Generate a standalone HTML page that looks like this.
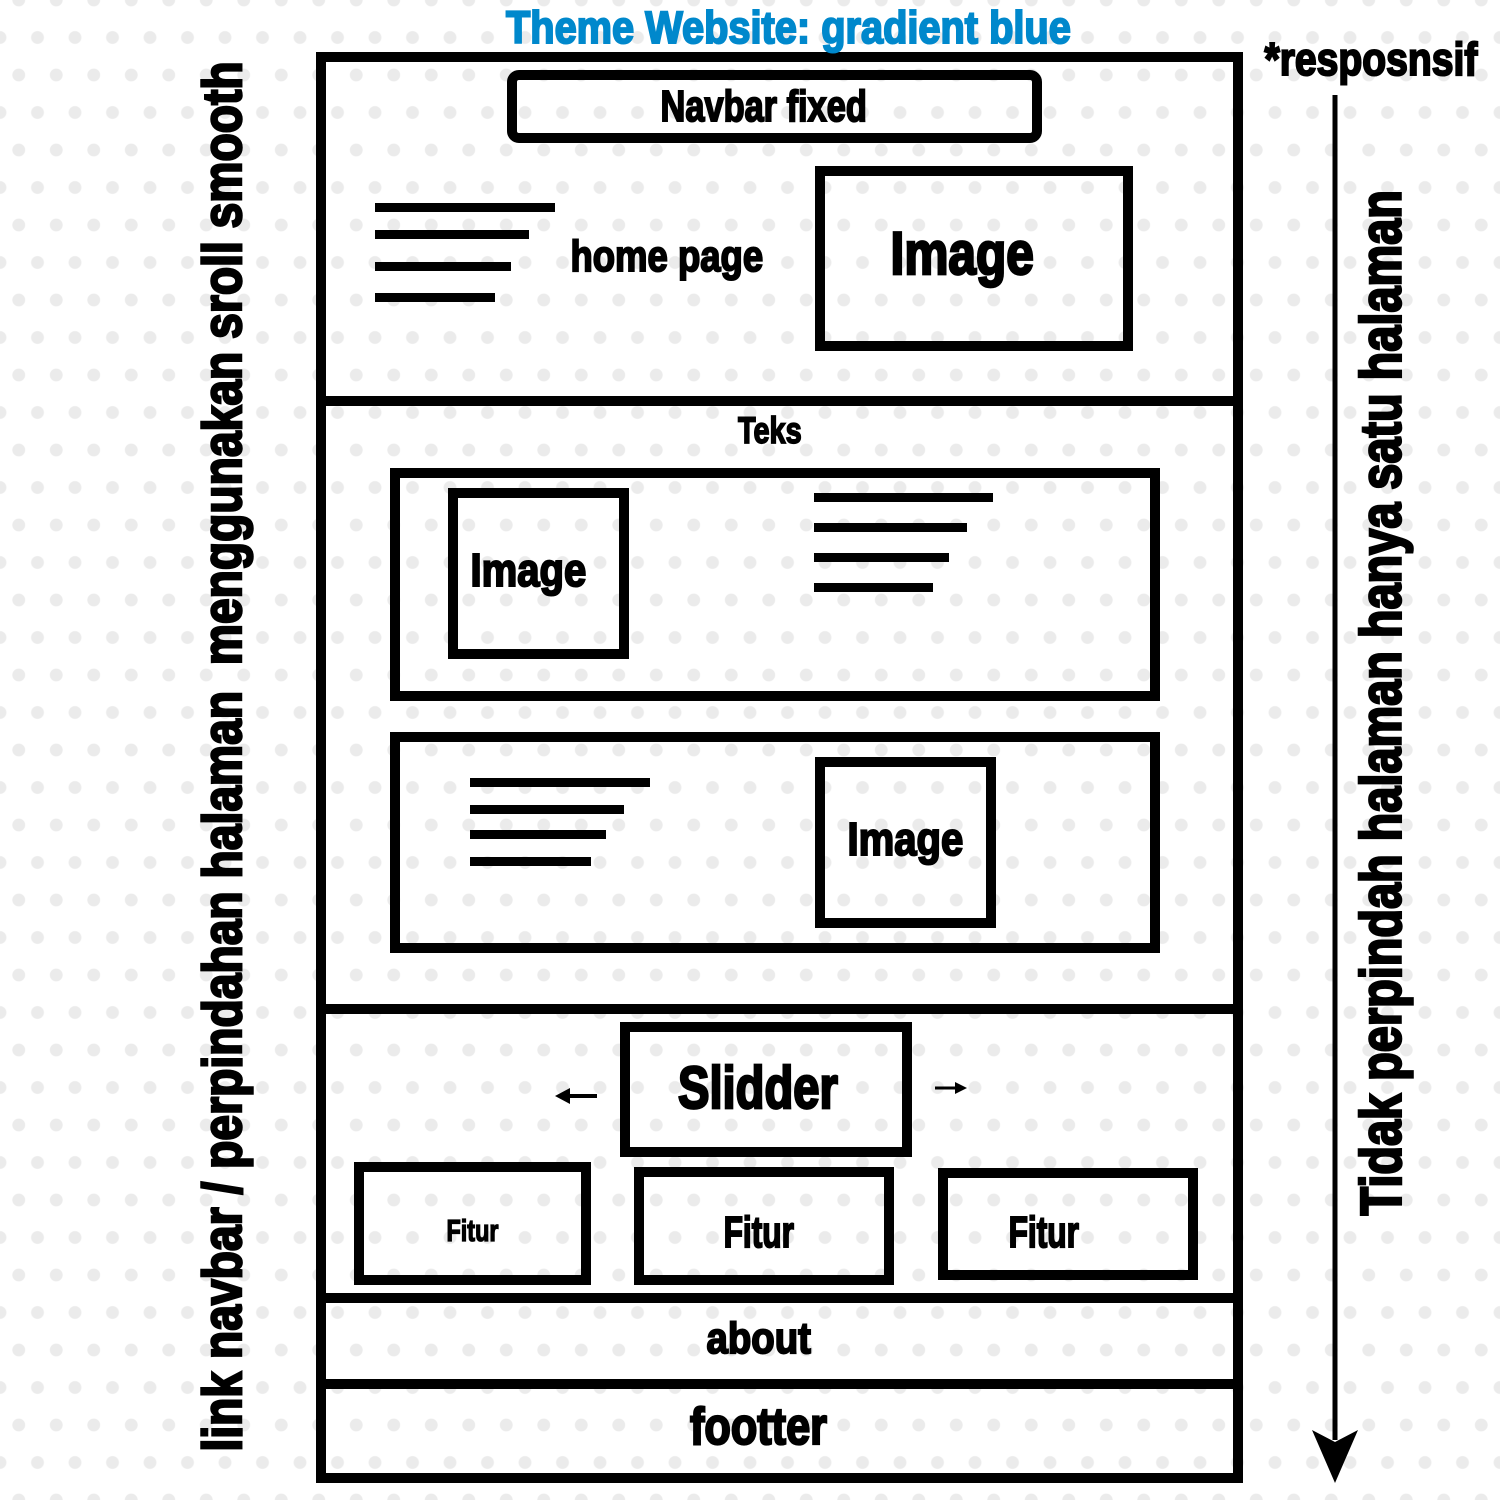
<!DOCTYPE html>
<html><head><meta charset="utf-8"><style>
html,body{margin:0;padding:0}
body{width:1500px;height:1500px;position:relative;overflow:hidden;background-color:#fff;
background-image:radial-gradient(circle at center,#ebebeb 6px,transparent 6.8px),radial-gradient(circle at center,#ebebeb 6px,transparent 6.8px);
background-size:37.5px 75px,37.5px 75px;background-position:0 -37.5px,-18.75px 0;}
.b{position:absolute;border:10px solid #000;box-sizing:border-box}
.l{position:absolute;background:#000;height:9px}
.t{position:absolute;white-space:pre;line-height:1;font-family:"Liberation Sans Narrow","Liberation Sans",sans-serif;font-weight:bold;color:#000;transform-origin:center center}
</style></head><body>
<div class="b" style="left:316px;top:52px;width:927px;height:1431px"></div>
<div class="l" style="left:316px;top:396px;width:927px;height:10px"></div>
<div class="l" style="left:316px;top:1004px;width:927px;height:10px"></div>
<div class="l" style="left:316px;top:1293px;width:927px;height:10px"></div>
<div class="l" style="left:316px;top:1379px;width:927px;height:10px"></div>
<div class="b" style="left:507px;top:70px;width:535px;height:73px;border-radius:12px"></div>
<div class="l" style="left:375px;top:203px;width:180px"></div>
<div class="l" style="left:375px;top:230px;width:154px"></div>
<div class="l" style="left:375px;top:262px;width:136px"></div>
<div class="l" style="left:375px;top:293px;width:120px"></div>
<div class="b" style="left:815px;top:166px;width:318px;height:185px"></div>
<div class="b" style="left:390px;top:468px;width:770px;height:233px"></div>
<div class="b" style="left:448px;top:488px;width:181px;height:171px"></div>
<div class="l" style="left:814px;top:493px;width:179px"></div>
<div class="l" style="left:814px;top:523px;width:153px"></div>
<div class="l" style="left:814px;top:553px;width:135px"></div>
<div class="l" style="left:814px;top:583px;width:119px"></div>
<div class="b" style="left:390px;top:732px;width:770px;height:221px"></div>
<div class="l" style="left:470px;top:778px;width:180px"></div>
<div class="l" style="left:470px;top:805px;width:154px"></div>
<div class="l" style="left:470px;top:830px;width:136px"></div>
<div class="l" style="left:470px;top:857px;width:121px"></div>
<div class="b" style="left:815px;top:757px;width:181px;height:171px"></div>
<div class="b" style="left:620px;top:1022px;width:292px;height:135px"></div>
<div class="b" style="left:354px;top:1162px;width:237px;height:123px"></div>
<div class="b" style="left:634px;top:1167px;width:260px;height:118px"></div>
<div class="b" style="left:938px;top:1168px;width:260px;height:112px"></div>
<svg style="position:absolute;left:0;top:0" width="1500" height="1500">
<path d="M597 1096H565" stroke="#000" stroke-width="4"/><path d="M555 1096L570 1088L570 1104Z" fill="#000"/>
<path d="M935 1088H958" stroke="#000" stroke-width="3"/><path d="M967 1088L955 1082L955 1094Z" fill="#000"/>
<path d="M1335 95V1440" stroke="#000" stroke-width="5"/><path d="M1312 1430L1335 1483L1358 1430L1335 1442Z" fill="#000"/>
</svg>
<script>
function T(s,cx,cy,w,h,r,c){var e=document.createElement('span');e.className='t';e.textContent=s;var f=h/0.729;e.style.fontSize=f+'px';e.style.webkitTextStroke=(0.045*f)+'px '+(c||'#000');if(c)e.style.color=c;document.body.appendChild(e);var mw=e.offsetWidth,mh=e.offsetHeight;e.style.left=(cx-mw/2)+'px';e.style.top=(cy-mh/2+0.02*f)+'px';e.style.transform=(r?'rotate('+r+'deg) ':'')+'scaleX('+(w/mw)+')';}
T('Theme Website: gradient blue',788,27,565,33,0,'#0088cc');
T('Navbar fixed',763,106,206,32);
T('home page',667,256,193,32);
T('Image',962,252,143,44);
T('Teks',770,430,64,27);
T('Image',528,570,116,34);
T('Image',905,839,116,34);
T('Slidder',758,1087,160,43);
T('Fitur',472,1231,52,22);
T('Fitur',758,1232,70,32);
T('Fitur',1043,1232,70,32);
T('about',758,1338,104,32);
T('footter',758,1426,137,38);
T('*resposnsif',1371,59,213,34);
T('link navbar / perpindahan halaman  menggunakan sroll smooth',222,755,1390,40,-90);
T('Tidak perpindah halaman hanya satu halaman',1382,702,1025,42,-90);
</script>
</body></html>
